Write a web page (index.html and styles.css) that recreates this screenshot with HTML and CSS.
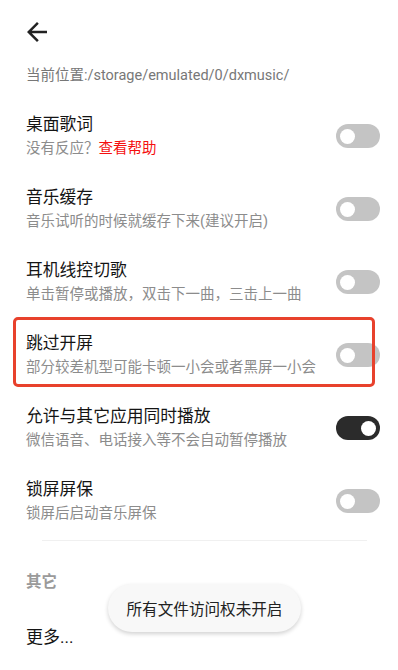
FILE: index.html
```html
<!DOCTYPE html>
<html lang="zh-CN">
<head>
	<meta charset="UTF-8">
	<title>设置</title>
	<link rel="stylesheet" href="styles.css">
</head>
<body>
	<div class="page">
		<div class="header">
			<svg class="back" viewBox="0 0 24 24" width="30" height="30">
				<path d="M20 11H7.83l5.59-5.59L12 4l-8 8 8 8 1.41-1.41L7.83 13H20v-2z" fill="#222"/>
			</svg>
		</div>

		<div class="path">当前位置:/storage/emulated/0/dxmusic/</div>

		<div class="list">
			<div class="item">
				<div class="item_text">
					<div class="item_title">桌面歌词</div>
					<div class="item_sub">没有反应？<span class="link">查看帮助</span></div>
				</div>
				<div class="switch"><span class="knob"></span></div>
			</div>

			<div class="item">
				<div class="item_text">
					<div class="item_title">音乐缓存</div>
					<div class="item_sub">音乐试听的时候就缓存下来(建议开启)</div>
				</div>
				<div class="switch"><span class="knob"></span></div>
			</div>

			<div class="item">
				<div class="item_text">
					<div class="item_title">耳机线控切歌</div>
					<div class="item_sub">单击暂停或播放，双击下一曲，三击上一曲</div>
				</div>
				<div class="switch"><span class="knob"></span></div>
			</div>

			<div class="item">
				<div class="item_text">
					<div class="item_title">跳过开屏</div>
					<div class="item_sub">部分较差机型可能卡顿一小会或者黑屏一小会</div>
				</div>
				<div class="switch"><span class="knob"></span></div>
				<div class="mark"></div>
			</div>

			<div class="item">
				<div class="item_text">
					<div class="item_title">允许与其它应用同时播放</div>
					<div class="item_sub">微信语音、电话接入等不会自动暂停播放</div>
				</div>
				<div class="switch on"><span class="knob"></span></div>
			</div>

			<div class="item">
				<div class="item_text">
					<div class="item_title">锁屏屏保</div>
					<div class="item_sub">锁屏后启动音乐屏保</div>
				</div>
				<div class="switch"><span class="knob"></span></div>
			</div>
		</div>

		<div class="divider"></div>

		<div class="section">其它</div>
		<div class="more">更多...</div>

		<div class="toast">所有文件访问权未开启</div>
	</div>
</body>
</html>
```

FILE: styles.css
```css
body {
	margin: 0;
	padding: 0;
	background: #fff;
	font-family: Roboto, "Noto Sans CJK SC", sans-serif;
	overflow: hidden;
}

.page {
	width: 398px;
	height: 670px;
	position: relative;
}

.header {
	height: 64px;
	display: flex;
	align-items: center;
	padding-left: 22px;
}

.back { display: block; }

.path {
	padding-left: 26px;
	height: 24px;
	line-height: 24px;
	font-size: 14.5px;
	color: #777;
	margin-bottom: 12px;
}

.item {
	position: relative;
	display: flex;
	align-items: center;
	padding: 12px 18px 13px 26px;
}

.item_text { flex: 1; }

.item_title {
	font-size: 16.8px;
	line-height: 24px;
	color: #141414;
}

.item_sub {
	margin-top: 2px;
	font-size: 14.5px;
	line-height: 22px;
	color: #8c8c8c;
}

.link { color: #f50f0f; }

.switch {
	width: 44px;
	height: 24px;
	border-radius: 12px;
	background: #c4c4c4;
	display: flex;
	align-items: center;
	padding: 0 4px;
	box-sizing: border-box;
}

.knob {
	width: 15px;
	height: 15px;
	border-radius: 50%;
	background: #fff;
}

.switch.on {
	background: #2b2b2b;
	justify-content: flex-end;
}

/* 标注框 */
.mark {
	position: absolute;
	left: 13px;
	top: -2px;
	width: 362px;
	height: 70px;
	box-sizing: border-box;
	border: 3px solid #e8412c;
	border-radius: 5px;
}

.divider {
	height: 1px;
	background: #f0f0f0;
	margin: 2px 31px 0 42px;
}

.section {
	padding-left: 26px;
	margin-top: 30px;
	line-height: 22px;
	font-size: 15.5px;
	font-weight: bold;
	color: #9a9a9a;
}

.more {
	padding-left: 26px;
	margin-top: 32px;
	line-height: 24px;
	font-size: 17px;
	color: #141414;
}

.toast {
	position: absolute;
	left: 108px;
	top: 584px;
	width: 193px;
	height: 48px;
	border-radius: 24px;
	background: #f8f8f8;
	box-shadow: 0 2px 4px rgba(0, 0, 0, .18);
	display: flex;
	align-items: center;
	justify-content: center;
	font-size: 15.6px;
	color: #222;
}
```
